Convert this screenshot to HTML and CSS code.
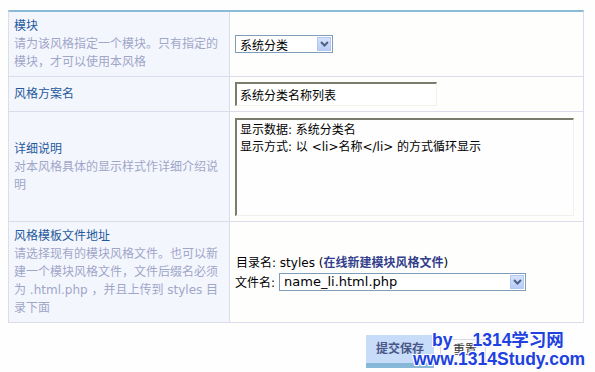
FILE: index.html
```html
<!DOCTYPE html>
<html lang="zh-CN">
<head>
    <meta charset="UTF-8">
    <title>模块风格设置</title>
    <link rel="stylesheet" href="styles.css">
</head>
<body>
    <div class="page">
        <div class="form-grid">
            <div class="cell head row-1">
                <div>
                    <div class="label">模块</div>
                    <div class="desc">请为该风格指定一个模块。只有指定的模块，才可以使用本风格</div>
                </div>
            </div>
            <div class="cell field row-1">
                <div class="select select-small">
                    <span>系统分类</span>
                    <span class="arrow"><svg width="9" height="6" viewBox="0 0 9 6"><polyline points="1,1 4.5,4.5 8,1" fill="none" stroke="#4d6185" stroke-width="2"/></svg></span>
                </div>
            </div>

            <div class="cell head row-2">
                <div class="label">风格方案名</div>
            </div>
            <div class="cell field row-2">
                <input type="text" class="text-input" value="系统分类名称列表">
            </div>

            <div class="cell head row-3">
                <div>
                    <div class="label">详细说明</div>
                    <div class="desc">对本风格具体的显示样式作详细介绍说明</div>
                </div>
            </div>
            <div class="cell field row-3">
                <textarea class="text-area">显示数据: 系统分类名
显示方式: 以 &lt;li&gt;名称&lt;/li&gt; 的方式循环显示</textarea>
            </div>

            <div class="cell head row-4">
                <div>
                    <div class="label">风格模板文件地址</div>
                    <div class="desc">请选择现有的模块风格文件。也可以新建一个模块风格文件，文件后缀名必须为 .html.php ，并且上传到 styles 目录下面</div>
                </div>
            </div>
            <div class="cell field row-4">
                <div>
                    <div class="dir-line">目录名: styles (<a href="#" class="new-link">在线新建模块风格文件</a>)</div>
                    <div class="file-line">
                        <span class="file-label">文件名:</span>
                        <div class="select select-wide">
                            <span>name_li.html.php</span>
                            <span class="arrow"><svg width="9" height="6" viewBox="0 0 9 6"><polyline points="1,1 4.5,4.5 8,1" fill="none" stroke="#4d6185" stroke-width="2"/></svg></span>
                        </div>
                    </div>
                </div>
            </div>
        </div>

        <div class="actions">
            <button type="button" class="btn-submit">提交保存</button>
            <div class="btn-reset">重置</div>
        </div>

        <div class="watermark">
            <div><span class="wm-by">by</span>1314学习网</div>
            <div>www.1314Study.com</div>
        </div>
    </div>
</body>
</html>
```

FILE: styles.css
```css
body {
    margin: 0;
    padding: 0;
    background-color: #fefefe;
    font-family: "DejaVu Sans", "Noto Sans CJK SC", sans-serif;
    font-size: 12px;
    color: #000;
}
.page {
    position: relative;
    padding: 10px 8px 0 8px;
    height: 362px;
}
.form-grid {
    display: grid;
    grid-template-columns: 221px 353px;
    grid-template-rows: 65px 35px 110px 101px;
    width: 574px;
    border-top: 2px solid #8abcd8;
    border-left: 1px solid #dcdcec;
    border-right: 1px solid #dcdcec;
}
.cell {
    display: flex;
    align-items: center;
    box-sizing: border-box;
    border-bottom: 1px solid #dcdcec;
}
.head {
    background-color: #f4f6fe;
    border-right: 1px solid #dcdcec;
    padding: 0 6px 0 5px;
}
.field {
    background-color: #fefefc;
    padding: 0 6px 0 5px;
}
.label {
    color: #1f5a9c;
    line-height: 18px;
}
.desc {
    color: #a0a6c8;
    line-height: 18px;
}
.select {
    position: relative;
    display: flex;
    align-items: center;
    box-sizing: border-box;
    height: 18px;
    border: 1px solid #7f9db9;
    background-color: #fff;
    padding-left: 4px;
}
.select-small {
    width: 98px;
}
.select-wide {
    width: 247px;
    font-size: 13px;
}
.select .arrow {
    position: absolute;
    right: 1px;
    top: 1px;
    width: 14px;
    height: 14px;
    display: flex;
    align-items: center;
    justify-content: center;
    background: linear-gradient(#d6e2fc, #b8ccf6);
    border: 1px solid #b4c8f0;
    box-sizing: border-box;
}
.text-input {
    box-sizing: border-box;
    width: 202px;
    height: 24px;
    margin: 0;
    padding: 1px 3px;
    border-style: solid;
    border-width: 2px 1px 1px 2px;
    border-color: #7c7c6c #f4f0ec #f4f0ec #7c7c6c;
    background-color: #fff;
    font-family: inherit;
    font-size: 12px;
}
.text-area {
    box-sizing: border-box;
    width: 339px;
    height: 98px;
    margin: 0;
    padding: 2px 3px;
    border-style: solid;
    border-width: 2px 1px 1px 2px;
    border-color: #7c7c6c #f4f0ec #f4f0ec #7c7c6c;
    background-color: #fffefe;
    font-family: inherit;
    font-size: 12px;
    line-height: 17px;
    resize: none;
}
.dir-line {
    line-height: 18px;
    padding-left: 1px;
}
.new-link {
    color: #333f8c;
    font-weight: bold;
    text-decoration: none;
}
.file-line {
    display: flex;
    align-items: center;
    gap: 4px;
    margin-top: 1px;
}
.actions {
    display: flex;
    align-items: flex-start;
    gap: 6px;
    padding-left: 358px;
    margin-top: 12px;
}
.btn-submit {
    width: 68px;
    height: 33px;
    margin: 0;
    padding: 0 0 4px 0;
    border: none;
    border-bottom: 5px solid #88b8d8;
    background-color: #c6dcf8;
    color: #4a5688;
    font-family: inherit;
    font-size: 12px;
    font-weight: bold;
}
.btn-reset {
    box-sizing: border-box;
    width: 46px;
    height: 24px;
    margin-top: 4px;
    padding: 3px 0 0 12px;
    border: 1px solid #dadae2;
    background-color: #fcfcfc;
    color: #333;
    line-height: 14px;
}
.watermark {
    position: absolute;
    left: 413px;
    top: 331px;
    color: #2040e0;
    font-family: "Liberation Sans", "Noto Sans CJK SC", sans-serif;
    font-size: 17.5px;
    font-weight: bold;
    line-height: 19px;
    text-shadow: 1px 1px 0 #fff, -1px -1px 0 #fff, 1px -1px 0 #fff, -1px 1px 0 #fff, 0 0 3px #c8d0ff;
}
.watermark div:first-child {
    padding-left: 19px;
}
.wm-by {
    margin-right: 20px;
}
```
